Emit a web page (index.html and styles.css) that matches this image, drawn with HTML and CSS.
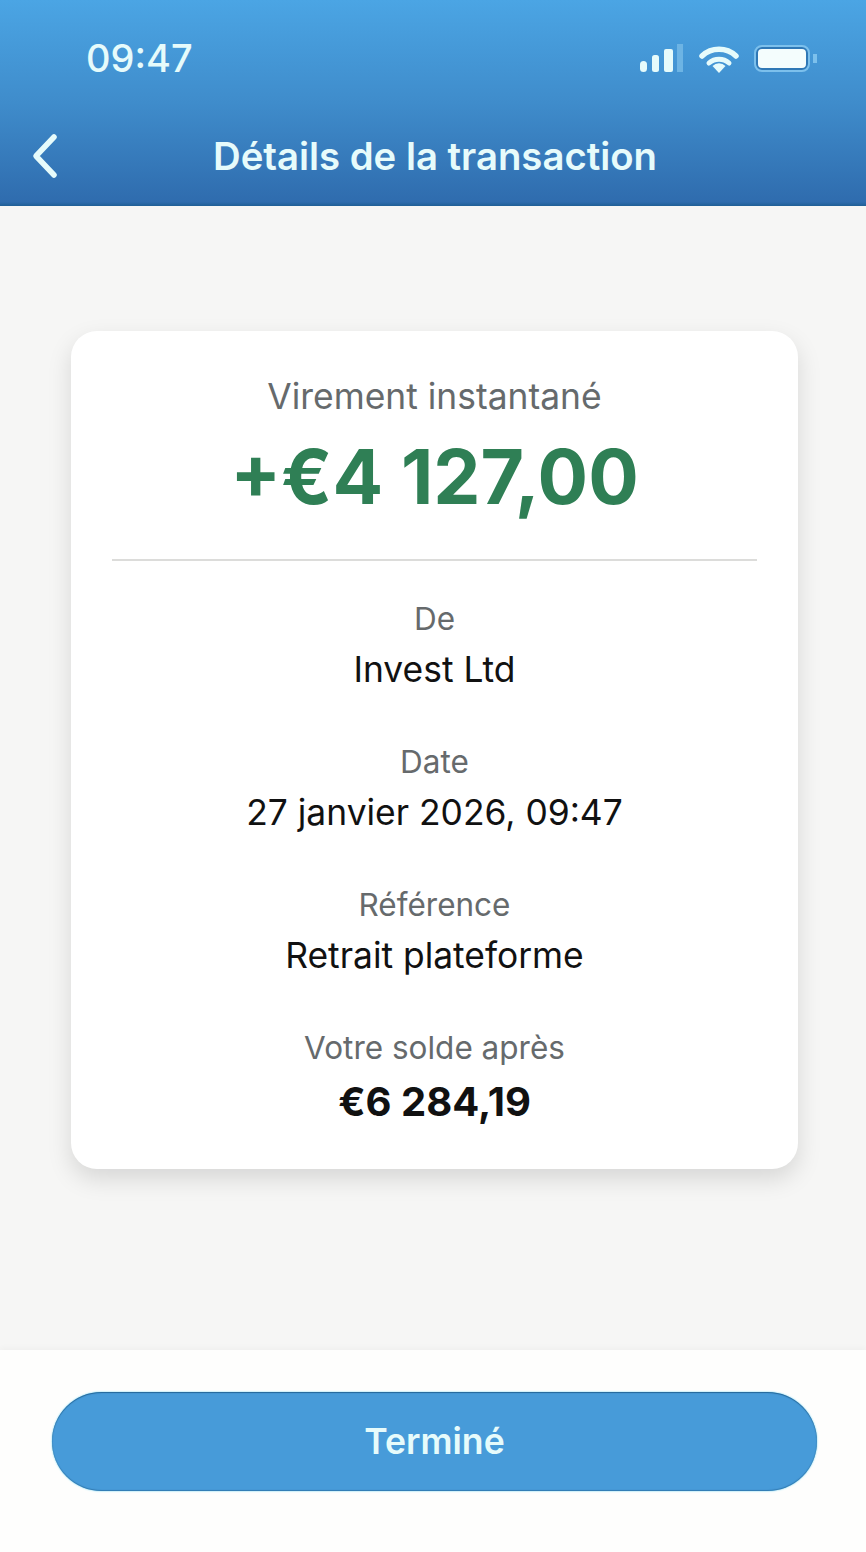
FILE: index.html
```html
<!DOCTYPE html>
<html lang="fr">
<head>
  <meta charset="UTF-8" />
  <meta name="viewport" content="width=device-width, initial-scale=1.0" />
  <title>Détails de la transaction</title>
  <link rel="stylesheet" href="styles.css">
</head>
<body>
  <div class="screen">
    <header class="header">
      <div class="status-bar">
        <span class="time">09:47</span>
        <div class="status-icons">
          <svg class="icon-signal" width="43" height="30" viewBox="0 0 43 30">
            <rect x="0" y="18" width="7" height="11" rx="3.5" fill="#e6fbfb"/>
            <rect x="12" y="12" width="7" height="17" rx="2.5" fill="#e6fbfb"/>
            <rect x="24" y="6" width="9" height="23" rx="2" fill="#e6fbfb"/>
            <rect x="37" y="1" width="6" height="28" fill="#6db4e4"/>
          </svg>
          <svg class="icon-wifi" width="40" height="30" viewBox="0 0 40 30">
            <path d="M3 13 A25 25 0 0 1 37 13" fill="none" stroke="#e6fbfb" stroke-width="5.5" stroke-linecap="round"/>
            <path d="M10 20 A15 15 0 0 1 30 20" fill="none" stroke="#e6fbfb" stroke-width="5" stroke-linecap="round"/>
            <path d="M13.5 23 A9 9 0 0 1 26.5 23 L20 30 Z" fill="#e6fbfb"/>
          </svg>
          <div class="battery">
            <div class="battery-fill"></div>
            <div class="battery-cap"></div>
          </div>
        </div>
      </div>
      <div class="nav-bar">
        <svg class="icon-back" width="30" height="46" viewBox="0 0 30 46">
          <path d="M24 4 L6 23 L24 42" fill="none" stroke="#e6fbfb" stroke-width="5.5" stroke-linecap="round" stroke-linejoin="round"/>
        </svg>
        <h1 class="title">Détails de la transaction</h1>
      </div>
    </header>

    <main class="content">
      <section class="card">
        <div class="summary">
          <div class="label">Virement instantané</div>
          <div class="amount">+€4 127,00</div>
        </div>
        <div class="details">
          <div class="row">
            <div class="row-label">De</div>
            <div class="row-value">Invest Ltd</div>
          </div>
          <div class="row">
            <div class="row-label">Date</div>
            <div class="row-value">27 janvier 2026, 09:47</div>
          </div>
          <div class="row">
            <div class="row-label">Référence</div>
            <div class="row-value">Retrait plateforme</div>
          </div>
          <div class="row">
            <div class="row-label">Votre solde après</div>
            <div class="row-value balance">€6 284,19</div>
          </div>
        </div>
      </section>
    </main>

    <footer class="footer">
      <button class="done">Terminé</button>
    </footer>
  </div>
</body>
</html>
```

FILE: styles.css
```css
:root {
  --blue: #479bd9;
  --light: #e6fbfb;
  --grey: #666a6c;
  --text: #111111;
  --green: #2f7f55;
}

body {
  margin: 0;
  padding: 0;
  font-family: Inter, 'Liberation Sans', sans-serif;
  background-color: #f6f6f5;
  color: var(--text);
}

.screen {
  width: 866px;
  height: 1552px;
  display: flex;
  flex-direction: column;
  overflow: hidden;
}

.header {
  height: 206px;
  box-sizing: border-box;
  padding: 38px 49px 0 30px;
  background: linear-gradient(180deg, #4ba5e4 0%, #3f8ccb 50%, #2f6cae 98%, #1f5f96 100%);
  color: var(--light);
}

.status-bar {
  display: flex;
  justify-content: space-between;
  align-items: center;
  height: 40px;
  padding-left: 56px;
}

.time {
  font-size: 38px;
  font-weight: 500;
}

.status-icons {
  display: flex;
  align-items: center;
  gap: 16px;
}

.battery {
  display: flex;
  align-items: center;
  gap: 5px;
  margin-left: 1px;
}

.battery-fill {
  width: 48px;
  height: 19px;
  border: 2px solid #2f78b6;
  outline: 2px solid #7cc0ec;
  border-radius: 6px;
  background-color: #f4fdfd;
}

.battery-cap {
  width: 4px;
  height: 9px;
  background-color: #7cc0ec;
}

.nav-bar {
  display: flex;
  align-items: center;
  height: 50px;
  margin-top: 53px;
}

.icon-back {
  display: block;
}

.title {
  flex: 1;
  margin: 0 0 0 -30px;
  padding-left: 23px;
  text-align: center;
  font-size: 38.3px;
  font-weight: 600;
}

.content {
  flex: 1;
  padding: 125px 68px 0 71px;
}

.card {
  height: 838px;
  box-sizing: border-box;
  padding: 46px 41px 0;
  background-color: #ffffff;
  border-radius: 26px;
  box-shadow: 0 10px 24px rgba(0, 0, 0, 0.13);
  text-align: center;
}

.summary {
  height: 182px;
  border-bottom: 2px solid #dcdcda;
}

.label {
  font-size: 35.4px;
  line-height: 40px;
  color: var(--grey);
}

.amount {
  margin-top: 15px;
  font-size: 75px;
  line-height: 90px;
  font-weight: 700;
  color: var(--green);
}

.details {
  display: flex;
  flex-direction: column;
  gap: 52px;
  padding-top: 39px;
}

.row-label {
  font-size: 31.5px;
  line-height: 38px;
  color: var(--grey);
}

.row-value {
  margin-top: 11px;
  font-size: 35.4px;
  line-height: 42px;
}

.row-value.balance {
  margin-top: 14px;
  font-size: 40px;
  font-weight: 700;
}

.footer {
  height: 202px;
  box-sizing: border-box;
  padding: 42px 49px 0 52px;
  background-color: #fefefd;
  box-shadow: 0 -2px 6px rgba(0, 0, 0, 0.03);
}

.done {
  display: block;
  width: 100%;
  height: 99px;
  padding: 0;
  border: 0;
  border-radius: 50px;
  background-color: var(--blue);
  box-shadow: 0 0 2px #5ccdf0, inset 0 1px 1px rgba(0, 50, 90, 0.5), inset 0 -1px 1px rgba(0, 50, 90, 0.3);
  color: var(--light);
  font-family: inherit;
  font-size: 35.6px;
  font-weight: 600;
}
```
